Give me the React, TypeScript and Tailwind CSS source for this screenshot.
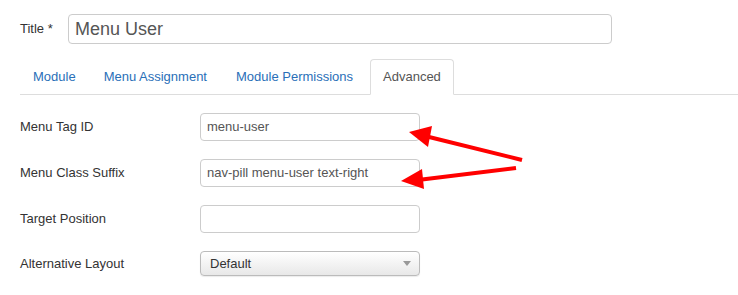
export default function App() {
  const rows = [
    { label: "Menu Tag ID", value: "menu-user" },
    { label: "Menu Class Suffix", value: "nav-pill menu-user text-right" },
    { label: "Target Position", value: "" },
  ];
  return (
    <div
      className="relative w-[738px] h-[295px] bg-white text-[13px] text-[#333] overflow-hidden"
      style={{ fontFamily: '"Liberation Sans", Arial, sans-serif' }}
    >
      <div className="flex items-center pt-[14px] pl-[20px]">
        <div className="w-[48px] leading-[18px]">Title *</div>
        <div className="w-[544px] h-[30px] border border-[#ccc] rounded-[4px] flex items-center pl-[6px] text-[18px] text-[#555]">
          Menu User
        </div>
      </div>
      <div className="mt-[15px] ml-[20px] flex border-b border-[#ddd] h-[36px] items-end">
        <div className="px-[12px] py-[8px] leading-[18px] mr-[2px] border border-transparent text-[#2a6fb8] -mb-px">
          Module
        </div>
        <div className="px-[12px] py-[8px] leading-[18px] mr-[3px] border border-transparent text-[#2a6fb8] -mb-px">
          Menu Assignment
        </div>
        <div className="px-[12px] py-[8px] leading-[18px] mr-[4px] border border-transparent text-[#2a6fb8] -mb-px">
          Module Permissions
        </div>
        <div className="px-[12px] py-[8px] leading-[18px] border border-[#ddd] border-b-white rounded-t-[4px] bg-white text-[#555] -mb-px">
          Advanced
        </div>
      </div>
      <div className="pl-[20px] pt-[18px] flex flex-col gap-[18px]">
        {rows.map((r) => (
          <div key={r.label} className="flex items-center h-[28px]">
            <div className="w-[180px] leading-[18px]">{r.label}</div>
            <div className="w-[220px] h-[28px] border border-[#ccc] rounded-[4px] flex items-center pl-[6px] text-[#555]">
              {r.value}
            </div>
          </div>
        ))}
        <div className="flex items-center h-[25px]">
          <div className="w-[180px] leading-[18px]">Alternative Layout</div>
          <div className="w-[220px] h-[25px] border border-[#bbb] rounded-[4px] flex items-center justify-between pl-[9px] pr-[8px] bg-gradient-to-b from-white to-[#e8e8e8] text-[#333] shadow-[0_1px_1px_rgba(0,0,0,0.08)]">
            <span>Default</span>
            <svg width="8" height="5" viewBox="0 0 8 5">
              <path d="M0 0 L8 0 L4 5 Z" fill="#999" />
            </svg>
          </div>
        </div>
      </div>
      <svg className="absolute left-0 top-0" width="738" height="295" viewBox="0 0 738 295">
        <line x1="522" y1="160" x2="425" y2="136" stroke="#ff0000" strokeWidth="4" />
        <polygon points="409,132 432,126 428,147" fill="#ff0000" />
        <line x1="516" y1="168" x2="418" y2="180" stroke="#ff0000" strokeWidth="4" />
        <polygon points="401,181 422,169 424,189" fill="#ff0000" />
      </svg>
    </div>
  );
}
